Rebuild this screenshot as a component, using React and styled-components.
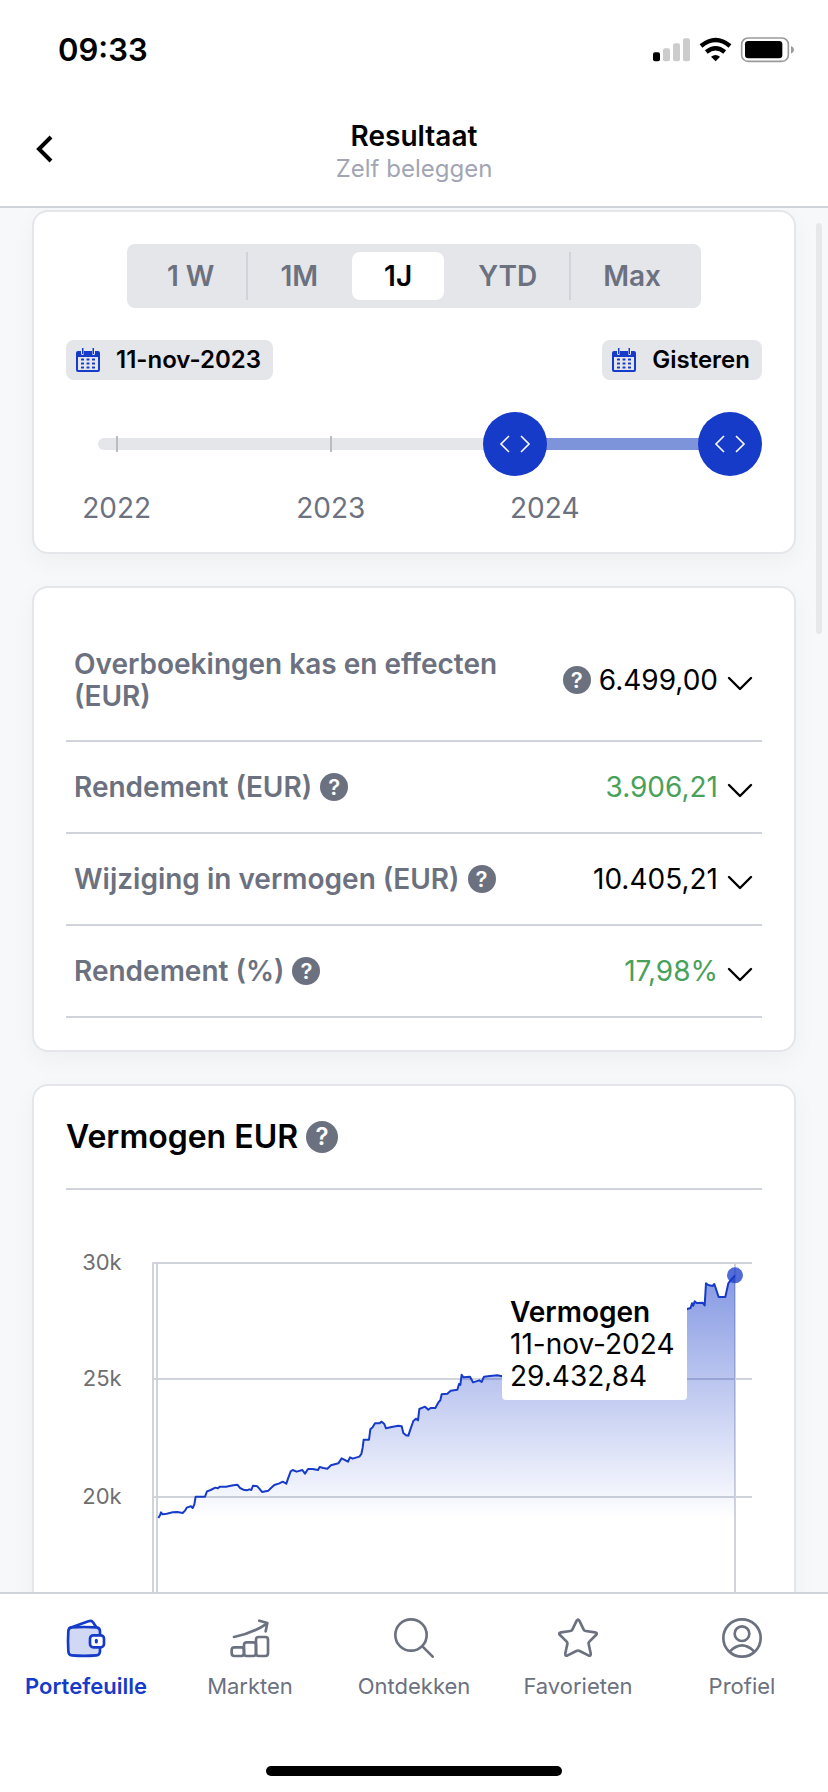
import React from 'react';
import styled, { createGlobalStyle } from 'styled-components';

const GlobalStyle = createGlobalStyle`
    * {
        box-sizing: border-box;
    }
    body {
        margin: 0;
        background: #fff;
        color: #000;
        font-family: 'Inter', 'Liberation Sans', sans-serif;
        font-size: 28px;
        line-height: 32px;
    }
    button {
        margin: 0;
        padding: 0;
        border: 0;
        background: none;
        color: inherit;
        font: inherit;
        cursor: pointer;
    }
`;

const Screen = styled.div`
    display: flex;
    flex-direction: column;
    height: 100vh;
`;

const StatusBar = styled.div`
    display: flex;
    flex: none;
    align-items: center;
    justify-content: space-between;
    height: 100px;
    padding: 0 34px 0 58px;
`;

const Clock = styled.span`
    font-size: 31px;
    font-weight: 600;
`;

const Header = styled.header`
    display: grid;
    flex: none;
    grid-template-columns: 64px 1fr 64px;
    align-items: center;
    height: 108px;
    padding: 0 12px 8px;
    border-bottom: 2px solid #d0d3da;
`;

const BackButton = styled.button`
    display: flex;
    align-items: center;
    justify-content: center;
    height: 64px;
`;

const Heading = styled.div`
    padding-top: 6px;
    text-align: center;
`;

const Title = styled.h1`
    margin: 0;
    font-size: 28px;
    font-weight: 600;
    line-height: 34px;
`;

const Subtitle = styled.div`
    color: #a2a6b4;
    font-size: 24px;
`;

const Content = styled.div`
    position: relative;
    display: flex;
    flex: 1;
    min-height: 0;
    background: #f7f8fa;
`;

const Main = styled.main`
    flex: 1;
    min-width: 0;
    overflow-y: auto;
    padding: 2px 32px 32px;
    scrollbar-width: none;
`;

const ScrollThumb = styled.div`
    position: absolute;
    top: 15px;
    right: 6px;
    width: 6px;
    height: 411px;
    border-radius: 3px;
    background: #e7e8ea;
`;

const Card = styled.section`
    margin-bottom: 32px;
    padding: 32px;
    border: 2px solid #e5e6ea;
    border-radius: 16px;
    background: #fff;
    box-shadow: 0 8px 24px rgba(0, 0, 0, 0.04);
`;

const Periods = styled.div`
    display: flex;
    width: fit-content;
    margin: 0 auto;
    padding: 8px;
    border-radius: 8px;
    background: #e5e6ea;
`;

const Period = styled.button`
    height: 48px;
    padding: 0 32px;
    border-radius: 8px;
    background: ${props => props.$active ? '#fff' : 'none'};
    color: ${props => props.$active ? '#000' : '#6c7180'};
    font-weight: 600;
`;

const Divider = styled.span`
    width: 2px;
    background: ${props => props.$hidden ? 'transparent' : '#d0d3da'};
`;

const Dates = styled.div`
    display: flex;
    justify-content: space-between;
    margin-top: 32px;
`;

const DateButton = styled.button`
    display: flex;
    align-items: center;
    gap: 16px;
    height: 40px;
    padding: 0 12px 0 10px;
    border-radius: 8px;
    background: #e5e6ea;
    font-size: 24px;
    font-weight: 600;
`;

const Slider = styled.div`
    position: relative;
    height: 64px;
    margin-top: 32px;
    padding: 26px 0 0 32px;
`;

const Track = styled.div`
    height: 12px;
    border-radius: 6px;
    background: #e5e6ea;
`;

// spans the distance the centre of a handle can travel
const Scale = styled.div`
    position: absolute;
    top: 0;
    bottom: 0;
    left: 32px;
    right: 32px;
`;

const Tick = styled.span`
    position: absolute;
    top: 24px;
    width: 2px;
    height: 16px;
    margin-left: -1px;
    background: #bbbcbf;
`;

const Selected = styled.div`
    position: absolute;
    top: 26px;
    height: 12px;
    background: #7e94da;
`;

const Handle = styled.div`
    position: absolute;
    top: 0;
    display: flex;
    align-items: center;
    justify-content: center;
    width: 64px;
    height: 64px;
    margin-left: -32px;
    border-radius: 50%;
    background: #173bc9;
`;

const RangeInput = styled.input`
    position: absolute;
    top: 0;
    left: 0;
    width: 100%;
    height: 64px;
    margin: 0;
    opacity: 0;
    pointer-events: none;

    &::-webkit-slider-thumb {
        width: 64px;
        height: 64px;
        pointer-events: auto;
    }
`;

const Years = styled.div`
    position: relative;
    height: 28px;
    margin: 16px 32px 0;
    color: #6c7180;
`;

const Year = styled.span`
    position: absolute;
    width: 80px;
    margin-left: -40px;
    text-align: center;
`;

const Row = styled.div`
    display: flex;
    align-items: center;
    min-height: 92px;
    padding: 28px 8px;
    border-bottom: 2px solid #d0d3da;
`;

const RowLabel = styled.div`
    display: flex;
    flex: 1;
    align-items: center;
    gap: 8px;
    padding-right: 40px;
    color: #6c7180;
    font-weight: 600;
`;

const RowValue = styled.div`
    display: flex;
    align-items: center;
    gap: 8px;
    color: ${props => props.$positive ? '#48a15a' : '#000'};
`;

const Help = styled.button`
    flex: none;
    width: ${props => props.$large ? '32px' : '28px'};
    height: ${props => props.$large ? '32px' : '28px'};
    border-radius: 50%;
    background: #6c7180;
    color: #fff;
    font-size: ${props => props.$large ? '24px' : '22px'};
    font-weight: 600;
    line-height: 28px;
    text-align: center;
`;

const ExpandButton = styled.button`
    display: flex;
    padding-top: 8px;
    color: #000;
`;

const CardTitle = styled.div`
    display: flex;
    align-items: center;
    gap: 8px;
    padding-bottom: 32px;
    border-bottom: 2px solid #d0d3da;

    h2 {
        margin: 0;
        font-size: 32px;
        font-weight: 600;
        line-height: 38px;
    }
`;

const ChartArea = styled.div`
    position: relative;

    svg {
        display: block;
        width: 100%;
    }
    text {
        fill: #6f6f6f;
        font-size: 66px;
    }
`;

const Tooltip = styled.div`
    position: absolute;
    top: 98px;
    right: 75px;
    min-width: 185px;
    padding: 8px;
    border-radius: 4px;
    background: #fff;

    b {
        font-weight: 600;
    }
`;

const TabBar = styled.nav`
    display: flex;
    flex: none;
    height: 174px;
    padding: 24px 4px 0;
    border-top: 2px solid #d0d3da;
`;

const Tab = styled.a`
    display: flex;
    flex: 1;
    flex-direction: column;
    align-items: center;
    gap: 12px;
    color: ${props => props.$active ? '#173bc9' : '#6c7180'};
    font-size: 22px;
    font-weight: ${props => props.$active ? 600 : 400};
    text-decoration: none;
`;

const HomeBar = styled.div`
    display: flex;
    flex: none;
    justify-content: center;
    height: 26px;

    &::after {
        content: '';
        width: 296px;
        height: 10px;
        border-radius: 5px;
        background: #000;
    }
`;

const PERIODS = ['1 W', '1M', '1J', 'YTD', 'Max'];

// day 0 is 30-nov-2021
const LAST_DAY = 1078;
const YEARS = [
    { year: 2022, day: 32 },
    { year: 2023, day: 397 },
    { year: 2024, day: 762 },
];

const RESULTS = [
    { label: 'Overboekingen kas en effecten (EUR)', value: '6.499,00', helpAtValue: true },
    { label: 'Rendement (EUR)', value: '3.906,21', positive: true },
    { label: 'Wijziging in vermogen (EUR)', value: '10.405,21' },
    { label: 'Rendement (%)', value: '17,98%', positive: true },
];

const SERIES = [
    [415, 1330], [420, 1322], [423, 1313], [428, 1319], [440, 1317], [458, 1313], [472, 1312],
    [488, 1315], [495, 1308], [500, 1300], [513, 1296], [518, 1301], [523, 1290], [527, 1268],
    [555, 1268], [561, 1252], [572, 1248], [586, 1241], [593, 1243], [600, 1239], [618, 1239],
    [640, 1235], [652, 1233], [660, 1242], [670, 1247], [680, 1249], [688, 1246], [694, 1248],
    [699, 1236], [712, 1238], [718, 1244], [726, 1254], [745, 1250], [753, 1242], [763, 1234],
    [778, 1229], [788, 1224], [799, 1230], [804, 1215], [812, 1194], [818, 1190], [830, 1195],
    [847, 1190], [855, 1201], [864, 1187], [878, 1187], [894, 1190], [899, 1181], [910, 1184],
    [922, 1186], [933, 1177], [955, 1171], [965, 1156], [984, 1166], [990, 1153], [998, 1157],
    [1018, 1151], [1024, 1144], [1028, 1125], [1031, 1102], [1047, 1102], [1051, 1072],
    [1058, 1066], [1065, 1055], [1078, 1055], [1085, 1050], [1093, 1057], [1098, 1069],
    [1115, 1065], [1135, 1061], [1145, 1063], [1150, 1083], [1158, 1089], [1165, 1090],
    [1172, 1070], [1180, 1048], [1188, 1041], [1194, 1046], [1198, 1013], [1215, 1006],
    [1225, 1015], [1232, 1010], [1246, 1010], [1256, 993], [1261, 988], [1265, 970],
    [1282, 968], [1292, 960], [1312, 957], [1317, 940], [1321, 943], [1325, 913], [1330, 921],
    [1350, 919], [1359, 936], [1378, 930], [1385, 935], [1392, 919], [1410, 917], [1432, 915],
    [1446, 918], [1600, 890], [1750, 840], [1900, 760], [2001, 723], [2012, 720], [2016, 706],
    [2020, 713], [2024, 700], [2030, 705], [2048, 704], [2054, 712], [2058, 648], [2065, 653],
    [2078, 656], [2083, 650], [2096, 688], [2116, 688], [2125, 648], [2133, 638], [2145, 625],
];

const GRID = [
    { level: 589, label: '30k' },
    { level: 926, label: '25k' },
    { level: 1269, label: '20k' },
];

const CHART_TOP = 219;
const toY = level => CHART_TOP + Math.round((level - 589) * 1.033);

const toPercent = day => `${day / LAST_DAY * 100}%`;

const StatusIcons = () => (
    <svg width="141" height="26" viewBox="39 38 423 78" aria-hidden="true">
        <rect x="39" y="84" width="21" height="27" rx="6" />
        <g fill="#ccc">
            <rect x="69" y="72" width="21" height="39" rx="6" />
            <rect x="99" y="57" width="21" height="54" rx="6" />
            <rect x="129" y="42" width="21" height="69" rx="6" />
        </g>
        <g fill="none" stroke="#000" strokeWidth="13">
            <path d="M183 65 Q227 29 270 65" />
            <path d="M199 83 Q227 60 254 83" />
        </g>
        <path d="M213 97 Q227 87 240 97 L227 111 Z" />
        <rect x="305" y="41" width="140" height="70" rx="19" fill="none" stroke="#9a9a9a" strokeWidth="5" />
        <rect x="315" y="50" width="112" height="52" rx="10" />
        <path d="M453 65 Q462 69 462 76 Q462 84 453 88 Z" fill="#9a9a9a" />
    </svg>
);

const CalendarIcon = () => (
    <svg width="24" height="24" viewBox="0 0 24 24" fill="#173bc9" aria-hidden="true">
        <path d="M2 3h3v2.500a1.500 1.500 0 0 0 3 0V3h8v2.500a1.500 1.500 0 0 0 3 0V3h3a2 2 0 0 1 2 2v17a2 2 0 0 1-2 2H2a2 2 0 0 1-2-2V5a2 2 0 0 1 2-2zM2 9v13h20V9z" fillRule="evenodd" />
        <rect x="6" y="0" width="1.500" height="6" />
        <rect x="16.500" y="0" width="1.500" height="6" />
        {[10.5, 14.5, 18.5].map(y => [5, 10.5, 16].map(x => (
            <rect key={`${x}-${y}`} x={x} y={y} width="3" height="2" rx="0.500" />
        )))}
    </svg>
);

const HandleIcon = () => (
    <svg width="32" height="20" viewBox="0 0 32 20" fill="none" stroke="#fff" strokeWidth="1.600" aria-hidden="true">
        <path d="M10 2 L2 10 L10 18 M22 2 L30 10 L22 18" />
    </svg>
);

const ChevronDown = () => (
    <svg width="28" height="16" viewBox="0 0 28 16" fill="none" stroke="#000" strokeWidth="2.400" strokeLinecap="round" strokeLinejoin="round" aria-hidden="true">
        <path d="M3 2 L14 13 L25 2" />
    </svg>
);

const TabIcon = ({ viewBox = '0 0 120 120', children }) => (
    <svg width="40" height="40" viewBox={viewBox} fill="none" stroke="currentColor" strokeWidth="8" strokeLinecap="round" strokeLinejoin="round" aria-hidden="true">
        {children}
    </svg>
);

const TABS = [
    {
        label: 'Portefeuille',
        active: true,
        icon: (
            <TabIcon viewBox="198 114 120 120">
                <path d="M209 144 L265 124 Q275 120 279 127 L289 142" />
                <path d="M216 142 Q252 140 289 142 Q300 143 300 154 L300 213 Q300 225 289 226 Q252 229 216 226 Q205 225 205 213 Q203 184 205 154 Q205 143 216 142 Z" fill="#d0d8f4" />
                <rect x="270" y="166" width="42" height="36" rx="10" fill="#fff" />
                <path d="M289 181 v5" strokeWidth="9" />
            </TabIcon>
        ),
    },
    {
        label: 'Markten',
        icon: (
            <TabIcon viewBox="689 114 120 120">
                <rect x="694" y="202" width="37" height="26" rx="8" />
                <rect x="731" y="187" width="36" height="41" rx="8" />
                <rect x="767" y="171" width="36" height="57" rx="8" />
                <path d="M701 171 Q757 160 801 130 M777 122 L801 129 L796 154" />
            </TabIcon>
        ),
    },
    {
        label: 'Ontdekken',
        icon: (
            <TabIcon>
                <circle cx="51" cy="51" r="47" />
                <path d="M86 86 L116 116" />
            </TabIcon>
        ),
    },
    {
        label: 'Favorieten',
        icon: (
            <TabIcon>
                <path d="M56 8 Q60 2 64 8 L77 35 Q79 39 83 39 L111 43 Q120 45 114 51 L94 71 Q91 74 92 78 L98 106 Q99 116 91 112 L65 99 Q60 96 55 99 L29 112 Q21 116 22 106 L28 78 Q29 74 26 71 L6 51 Q0 45 9 43 L37 39 Q41 39 43 35 Z" />
            </TabIcon>
        ),
    },
    {
        label: 'Profiel',
        icon: (
            <TabIcon>
                <circle cx="60" cy="60" r="56" />
                <circle cx="60" cy="47" r="22" />
                <path d="M24 100 Q60 64 96 100" />
            </TabIcon>
        ),
    },
];

const Chart = () => {
    const line = 'M' + SERIES.map(([x, level]) => `${x} ${toY(level)}`).join(' L');

    return (
        <ChartArea>
            <svg viewBox="138 0 2088 1400">
                <defs>
                    <linearGradient id="fade" x1="0" y1="0" x2="0" y2="1">
                        <stop offset="0" stopColor="#173bc9" stopOpacity="0.520" />
                        <stop offset="1" stopColor="#173bc9" stopOpacity="0" />
                    </linearGradient>
                </defs>
                <g stroke="#d0d3da" strokeWidth="6">
                    {GRID.map(({ level }) => <path key={level} d={`M397 ${toY(level)} H2196`} />)}
                    <path d={`M399 ${CHART_TOP} V1400 M411 ${CHART_TOP} V1400 M2145 ${CHART_TOP} V1400`} />
                </g>
                {GRID.map(({ level, label }) => (
                    <text key={label} x="305" y={toY(level) + 21} textAnchor="end">{label}</text>
                ))}
                <path d={`${line} V${toY(1330)} H415 Z`} fill="url(#fade)" />
                <path d={line} fill="none" stroke="#173bc9" strokeWidth="6" strokeLinejoin="round" />
                <circle cx="2145" cy={toY(625)} r="24" fill="#173bc9" fillOpacity="0.750" />
            </svg>
            <Tooltip>
                <b>Vermogen</b>
                <div>11-nov-2024</div>
                <div>29.432,84</div>
            </Tooltip>
        </ChartArea>
    );
};

class App extends React.Component {
    state = {
        period: '1J',
        from: 711,
        to: LAST_DAY
    }

    handleFrom = (e) => {
        this.setState({ from: Math.min(Number(e.target.value), this.state.to) })
    }

    handleTo = (e) => {
        this.setState({ to: Math.max(Number(e.target.value), this.state.from) })
    }

    render(){
        const { period, from, to } = this.state;
        const active = PERIODS.indexOf(period);

        return (
            <Screen>
                <GlobalStyle />
                <StatusBar>
                    <Clock>09:33</Clock>
                    <StatusIcons />
                </StatusBar>
                <Header>
                    <BackButton aria-label="Terug">
                        <svg width="20" height="30" viewBox="0 0 20 30" fill="none" stroke="#000" strokeWidth="4">
                            <path d="M17 3 L5 15 L17 27" />
                        </svg>
                    </BackButton>
                    <Heading>
                        <Title>Resultaat</Title>
                        <Subtitle>Zelf beleggen</Subtitle>
                    </Heading>
                </Header>
                <Content>
                    <Main>
                        <Card>
                            <Periods>
                                {PERIODS.map((name, i) => (
                                    <React.Fragment key={name}>
                                        {i > 0 && <Divider $hidden={i === active || i === active + 1} />}
                                        <Period $active={i === active} onClick={() => this.setState({ period: name })}>
                                            {name}
                                        </Period>
                                    </React.Fragment>
                                ))}
                            </Periods>
                            <Dates>
                                <DateButton><CalendarIcon />11-nov-2023</DateButton>
                                <DateButton><CalendarIcon />Gisteren</DateButton>
                            </Dates>
                            <Slider>
                                <Track />
                                <Scale>
                                    {YEARS.map(({ year, day }) => <Tick key={year} style={{ left: toPercent(day) }} />)}
                                    <Selected style={{ left: toPercent(from), width: toPercent(to - from) }} />
                                    <Handle style={{ left: toPercent(from) }}><HandleIcon /></Handle>
                                    <Handle style={{ left: toPercent(to) }}><HandleIcon /></Handle>
                                </Scale>
                                <RangeInput type="range" aria-label="Van" max={LAST_DAY} value={from} onChange={this.handleFrom} />
                                <RangeInput type="range" aria-label="Tot" max={LAST_DAY} value={to} onChange={this.handleTo} />
                            </Slider>
                            <Years>
                                {YEARS.map(({ year, day }) => <Year key={year} style={{ left: toPercent(day) }}>{year}</Year>)}
                            </Years>
                        </Card>
                        <Card>
                            {RESULTS.map(({ label, value, positive, helpAtValue }) => (
                                <Row key={label}>
                                    <RowLabel>
                                        {label}
                                        {!helpAtValue && <Help aria-label={`Uitleg ${label}`}>?</Help>}
                                    </RowLabel>
                                    <RowValue $positive={positive}>
                                        {helpAtValue && <Help aria-label={`Uitleg ${label}`}>?</Help>}
                                        {value}
                                        <ExpandButton aria-label={`Toon ${label}`}><ChevronDown /></ExpandButton>
                                    </RowValue>
                                </Row>
                            ))}
                        </Card>
                        <Card>
                            <CardTitle>
                                <h2>Vermogen EUR</h2>
                                <Help $large aria-label="Uitleg vermogen">?</Help>
                            </CardTitle>
                            <Chart />
                        </Card>
                    </Main>
                    <ScrollThumb />
                </Content>
                <TabBar>
                    {TABS.map(({ label, active, icon }) => (
                        <Tab key={label} href="#" $active={active}>
                            {icon}
                            {label}
                        </Tab>
                    ))}
                </TabBar>
                <HomeBar />
            </Screen>
        );
    }
}

export default App;
